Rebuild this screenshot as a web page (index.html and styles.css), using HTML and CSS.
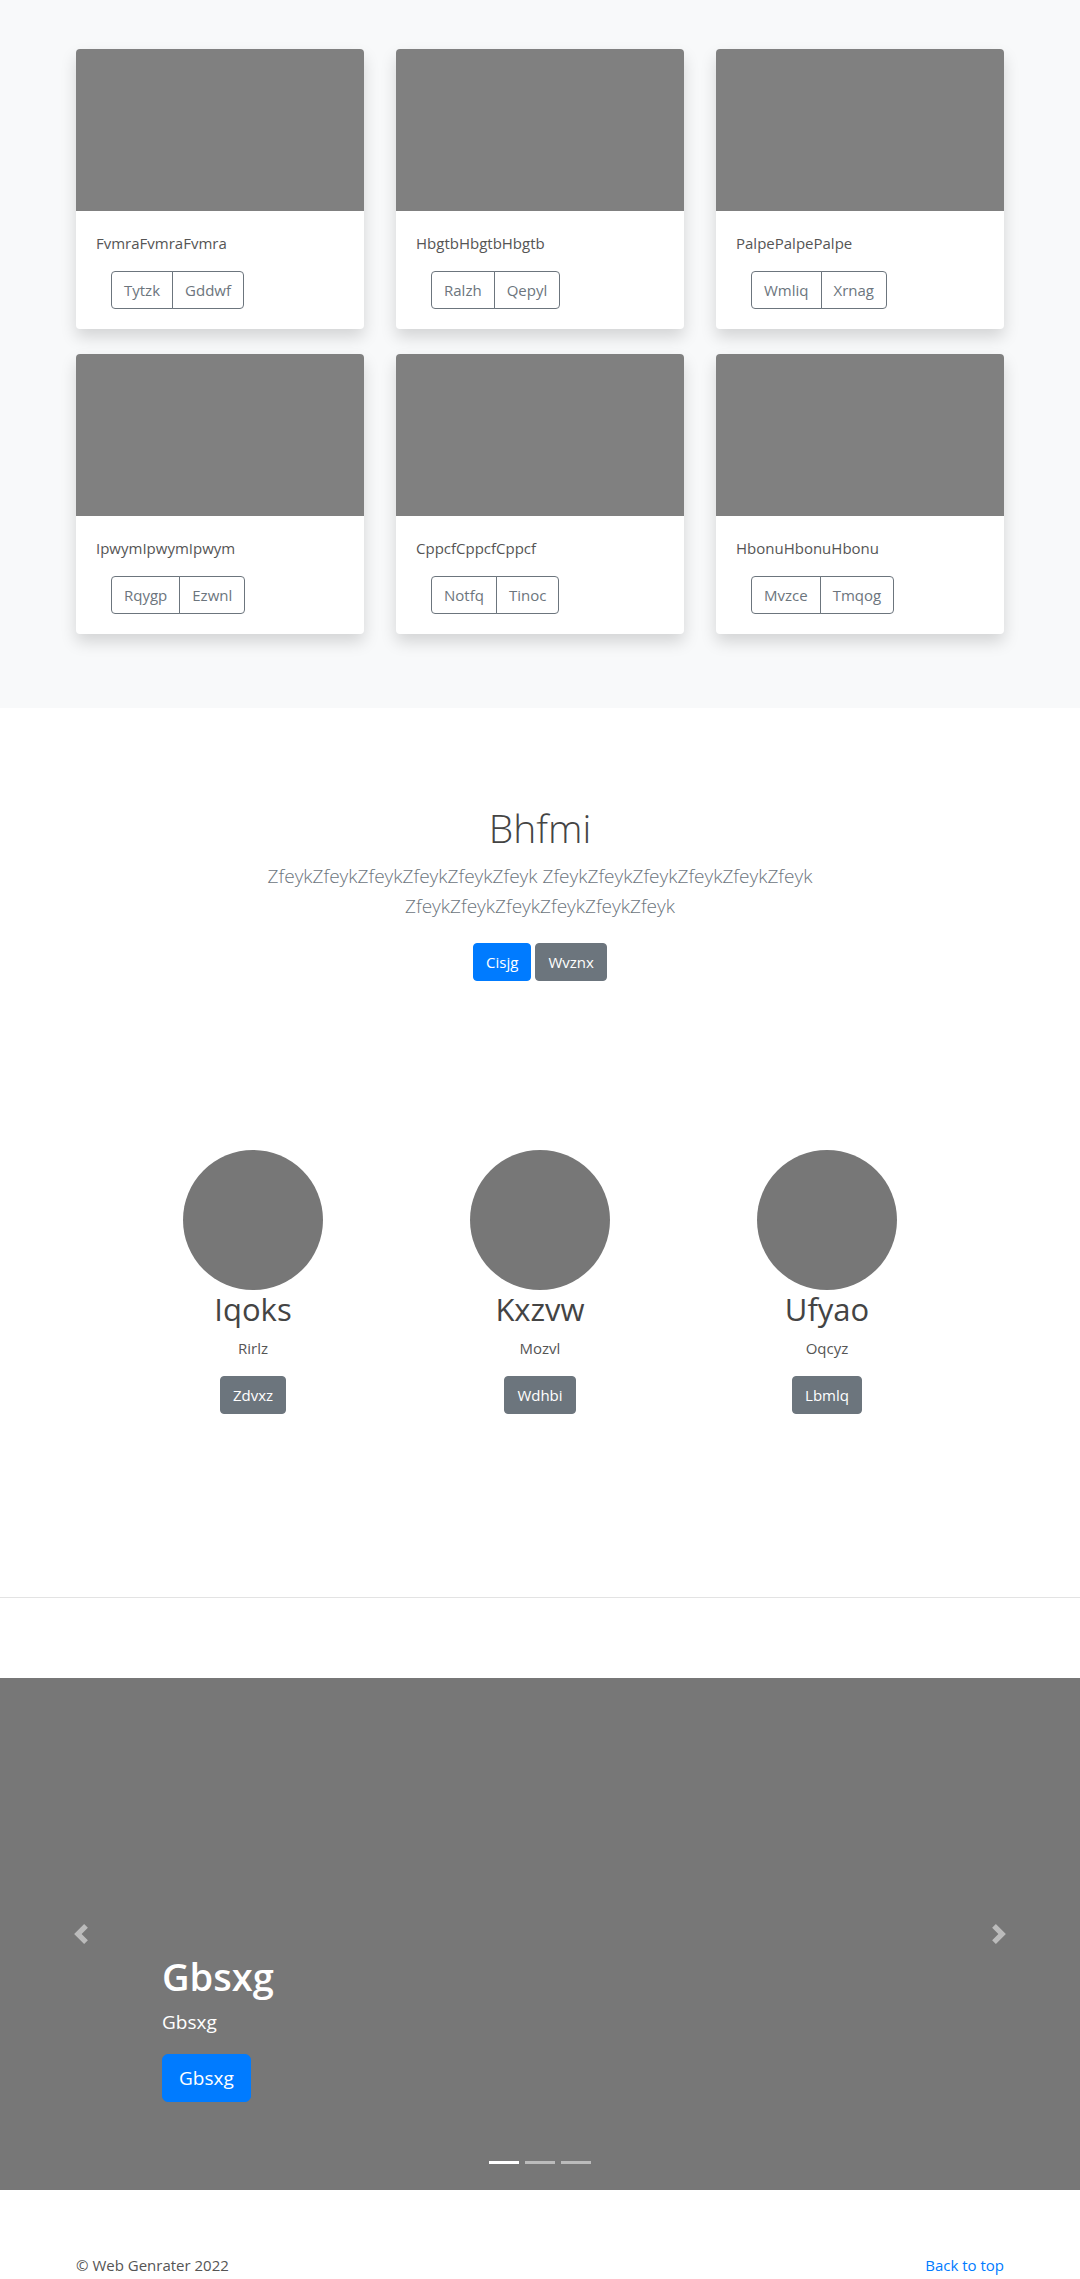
FILE: index.html
```html
<!DOCTYPE html>
<html lang="en">
<head>
<meta charset="utf-8">
<title>Album</title>
<link rel="stylesheet" href="styles.css">
</head>
<body>
<section class="album">
  <div class="cards">
    <div class="card"><div class="card-img"></div><div class="card-body"><p class="card-text">FvmraFvmraFvmra</p><div class="btn-group"><span class="btn-o">Tytzk</span><span class="btn-o">Gddwf</span></div></div></div>
    <div class="card"><div class="card-img"></div><div class="card-body"><p class="card-text">HbgtbHbgtbHbgtb</p><div class="btn-group"><span class="btn-o">Ralzh</span><span class="btn-o">Qepyl</span></div></div></div>
    <div class="card"><div class="card-img"></div><div class="card-body"><p class="card-text">PalpePalpePalpe</p><div class="btn-group"><span class="btn-o">Wmliq</span><span class="btn-o">Xrnag</span></div></div></div>
    <div class="card"><div class="card-img"></div><div class="card-body"><p class="card-text">IpwymIpwymIpwym</p><div class="btn-group"><span class="btn-o">Rqygp</span><span class="btn-o">Ezwnl</span></div></div></div>
    <div class="card"><div class="card-img"></div><div class="card-body"><p class="card-text">CppcfCppcfCppcf</p><div class="btn-group"><span class="btn-o">Notfq</span><span class="btn-o">Tinoc</span></div></div></div>
    <div class="card"><div class="card-img"></div><div class="card-body"><p class="card-text">HbonuHbonuHbonu</p><div class="btn-group"><span class="btn-o">Mvzce</span><span class="btn-o">Tmqog</span></div></div></div>
  </div>
</section>

<section class="hero">
  <div class="hero-inner">
    <h1 class="hero-title">Bhfmi</h1>
    <p class="lead">ZfeykZfeykZfeykZfeykZfeykZfeyk ZfeykZfeykZfeykZfeykZfeykZfeyk ZfeykZfeykZfeykZfeykZfeykZfeyk</p>
    <div class="hero-btns"><span class="btn btn-primary">Cisjg</span><span class="btn btn-secondary">Wvznx</span></div>
  </div>
</section>

<section class="marketing">
  <div class="col"><div class="circle"></div><h2 class="name">Iqoks</h2><p class="role">Rirlz</p><span class="btn btn-secondary">Zdvxz</span></div>
  <div class="col"><div class="circle"></div><h2 class="name">Kxzvw</h2><p class="role">Mozvl</p><span class="btn btn-secondary">Wdhbi</span></div>
  <div class="col"><div class="circle"></div><h2 class="name">Ufyao</h2><p class="role">Oqcyz</p><span class="btn btn-secondary">Lbmlq</span></div>
</section>

<hr class="divider">

<section class="carousel">
  <div class="caption">
    <h1 class="caption-title">Gbsxg</h1>
    <p class="caption-text">Gbsxg</p>
    <span class="btn btn-primary btn-lg">Gbsxg</span>
  </div>
  <span class="ctrl ctrl-prev"><svg viewBox="0 0 8 8" width="20" height="20"><path d="M5.25 0l-4 4 4 4 1.5-1.5-2.5-2.5 2.5-2.5-1.5-1.5z" fill="#fff"/></svg></span>
  <span class="ctrl ctrl-next"><svg viewBox="0 0 8 8" width="20" height="20"><path d="M2.75 0l-1.5 1.5 2.5 2.5-2.5 2.5 1.5 1.5 4-4-4-4z" fill="#fff"/></svg></span>
  <div class="indicators"><span class="ind active"></span><span class="ind"></span><span class="ind"></span></div>
</section>

<footer class="footer">
  <p class="copy">© Web Genrater 2022</p>
  <a class="top-link" href="#">Back to top</a>
</footer>
</body>
</html>
```

FILE: styles.css
```css
* { box-sizing: border-box; }
body {
  margin: 0;
  font-family: "Open Sans", "Noto Sans", sans-serif;
  font-size: 16px;
  line-height: 1.5;
  color: #212529;
  background: #fff;
}
p, h1, h2 { margin: 0; }

.album {
  background: #f8f9fa;
  padding: 49px 0 74px;
}
.cards {
  width: 928px;
  margin: 0 auto;
  display: grid;
  grid-template-columns: repeat(3, 288px);
  column-gap: 32px;
  row-gap: 25px;
}
.card {
  background: #fff;
  border-radius: 4px;
  overflow: hidden;
  box-shadow: 0 8px 16px rgba(0,0,0,.15);
}
.card-img { height: 162px; background: #808080; }
.card-body { padding: 20px; }
.card-text { color: #555; font-size: 15px; line-height: 24px; margin-bottom: 16px; }
.btn-group { display: inline-flex; margin-left: 15px; }
.btn-o {
  display: inline-block;
  border: 1px solid #6c757d;
  color: #6c757d;
  padding: 6px 12px;
  font-size: 15px;
  line-height: 24px;
}
.btn-o:first-child { border-radius: 4px 0 0 4px; }
.btn-o:last-child { border-radius: 0 4px 4px 0; margin-left: -1px; }

.hero {
  padding-top: 96px;
  text-align: center;
}
.hero-inner { width: 620px; margin: 0 auto; }
.hero-title {
  font-size: 39px;
  font-weight: 300;
  line-height: 48px;
  color: #444;
  margin-bottom: 9px;
}
.lead {
  font-size: 19px;
  font-weight: 300;
  line-height: 30px;
  color: #6c757d;
  margin-bottom: 22px;
}
.hero-btns { display: flex; justify-content: center; gap: 4px; }

.btn {
  display: inline-block;
  padding: 6px 12px;
  font-size: 15px;
  line-height: 24px;
  border-radius: 4px;
  color: #fff;
  border: 1px solid transparent;
}
.btn-primary { background: #007bff; border-color: #007bff; }
.btn-secondary { background: #6c757d; border-color: #6c757d; }
.btn-lg { padding: 8px 16px; font-size: 19px; line-height: 30px; border-radius: 6px; }

.marketing {
  width: 861px;
  margin: 169px auto 0;
  display: grid;
  grid-template-columns: repeat(3, 1fr);
}
.col { display: flex; flex-direction: column; align-items: center; text-align: center; }
.circle { width: 140px; height: 140px; border-radius: 50%; background: #777; }
.name { font-size: 31px; font-weight: 400; line-height: 38px; color: #444; margin-bottom: 8px; }
.role { font-size: 15px; line-height: 24px; color: #555; margin-bottom: 16px; }

.divider {
  border: 0;
  border-top: 1px solid #e3e3e3;
  margin: 183px 0 80px;
}

.carousel {
  position: relative;
  height: 512px;
  background: #777;
  display: flex;
  flex-direction: column;
  justify-content: flex-end;
  padding: 0 162px 88px;
  color: #fff;
}
.caption-title { font-size: 38px; font-weight: 600; line-height: 48px; margin-bottom: 7px; }
.caption-text { font-size: 19px; line-height: 30px; margin-bottom: 17px; }
.caption .btn-lg { align-self: flex-start; }
.ctrl {
  position: absolute;
  top: 246px;
  width: 20px;
  height: 20px;
  opacity: .5;
  display: block;
}
.ctrl svg { display: block; }
.ctrl-prev { left: 71px; }
.ctrl-next { right: 71px; }
.indicators {
  position: absolute;
  left: 0;
  right: 0;
  bottom: 26px;
  display: flex;
  justify-content: center;
  gap: 6px;
}
.ind { width: 30px; height: 3px; background: rgba(255,255,255,.5); }
.ind.active { background: #fff; }

.footer {
  width: 928px;
  margin: 0 auto;
  padding: 63px 0 48px;
  display: flex;
  justify-content: space-between;
  font-size: 15px;
  line-height: 24px;
}
.copy { color: #555; }
.top-link { color: #007bff; text-decoration: none; }
```
